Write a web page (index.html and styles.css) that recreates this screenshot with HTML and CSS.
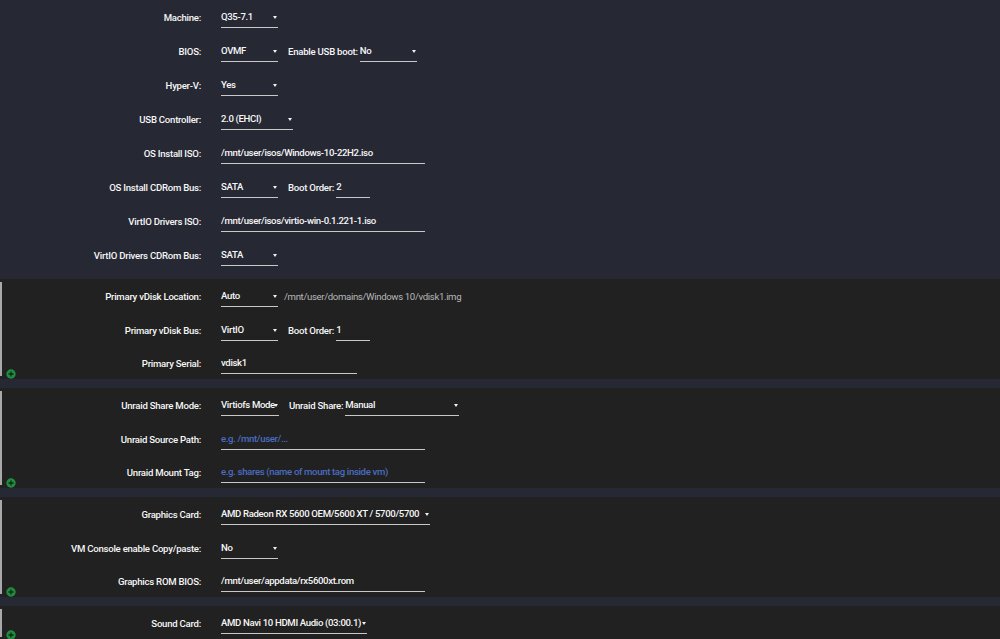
FILE: index.html
```html
<!DOCTYPE html>
<html lang="en">
<head>
    <meta charset="UTF-8">
    <meta name="viewport" content="width=device-width, initial-scale=1.0">
    <title>VM Settings</title>
    <link rel="stylesheet" href="styles.css">
</head>
<body>
    <div class="page">
        <!-- General settings -->
        <div class="block">
            <div class="row">
                <div class="label">Machine:</div>
                <div class="value"><div class="select w57">Q35-7.1</div></div>
            </div>
            <div class="row">
                <div class="label">BIOS:</div>
                <div class="value">
                    <div class="select w57">OVMF</div>
                    <span class="inline-label gap">Enable USB boot:</span>
                    <div class="select w57">No</div>
                </div>
            </div>
            <div class="row">
                <div class="label">Hyper-V:</div>
                <div class="value"><div class="select w57">Yes</div></div>
            </div>
            <div class="row">
                <div class="label">USB Controller:</div>
                <div class="value"><div class="select w72">2.0 (EHCI)</div></div>
            </div>
            <div class="row">
                <div class="label">OS Install ISO:</div>
                <div class="value"><input class="text w204" type="text" value="/mnt/user/isos/Windows-10-22H2.iso"></div>
            </div>
            <div class="row">
                <div class="label">OS Install CDRom Bus:</div>
                <div class="value">
                    <div class="select w57">SATA</div>
                    <span class="inline-label gap">Boot Order:</span>
                    <input class="text w34" type="text" value="2">
                </div>
            </div>
            <div class="row">
                <div class="label">VirtIO Drivers ISO:</div>
                <div class="value"><input class="text w204" type="text" value="/mnt/user/isos/virtio-win-0.1.221-1.iso"></div>
            </div>
            <div class="row">
                <div class="label">VirtIO Drivers CDRom Bus:</div>
                <div class="value"><div class="select w57">SATA</div></div>
            </div>
        </div>

        <!-- Disk -->
        <div class="section">
            <div class="row">
                <div class="label">Primary vDisk Location:</div>
                <div class="value">
                    <div class="select w57">Auto</div>
                    <span class="path">/mnt/user/domains/Windows 10/vdisk1.img</span>
                </div>
            </div>
            <div class="row">
                <div class="label">Primary vDisk Bus:</div>
                <div class="value">
                    <div class="select w57">VirtIO</div>
                    <span class="inline-label gap">Boot Order:</span>
                    <input class="text w34" type="text" value="1">
                </div>
            </div>
            <div class="row">
                <div class="label">Primary Serial:</div>
                <div class="value"><input class="text w136" type="text" value="vdisk1"></div>
            </div>
            <span class="add-btn"><svg width="10" height="10" viewBox="0 0 10 10"><circle cx="5" cy="5" r="4.7" fill="#1f8c3f"/><path d="M5 2.5v5M2.5 5h5" stroke="#0e2a16" stroke-width="1.3"/></svg></span>
        </div>

        <!-- Shares -->
        <div class="section">
            <div class="row">
                <div class="label">Unraid Share Mode:</div>
                <div class="value">
                    <div class="select w58">Virtiofs Mode</div>
                    <span class="inline-label gap">Unraid Share:</span>
                    <div class="select w114">Manual</div>
                </div>
            </div>
            <div class="row">
                <div class="label">Unraid Source Path:</div>
                <div class="value"><input class="text w204" type="text" placeholder="e.g. /mnt/user/..."></div>
            </div>
            <div class="row">
                <div class="label">Unraid Mount Tag:</div>
                <div class="value"><input class="text w204" type="text" placeholder="e.g. shares (name of mount tag inside vm)"></div>
            </div>
            <span class="add-btn"><svg width="10" height="10" viewBox="0 0 10 10"><circle cx="5" cy="5" r="4.7" fill="#1f8c3f"/><path d="M5 2.5v5M2.5 5h5" stroke="#0e2a16" stroke-width="1.3"/></svg></span>
        </div>

        <!-- Graphics -->
        <div class="section">
            <div class="row">
                <div class="label">Graphics Card:</div>
                <div class="value"><div class="select w209">AMD Radeon RX 5600 OEM/5600 XT / 5700/5700</div></div>
            </div>
            <div class="row">
                <div class="label">VM Console enable Copy/paste:</div>
                <div class="value"><div class="select w57">No</div></div>
            </div>
            <div class="row">
                <div class="label">Graphics ROM BIOS:</div>
                <div class="value"><input class="text w204" type="text" value="/mnt/user/appdata/rx5600xt.rom"></div>
            </div>
            <span class="add-btn"><svg width="10" height="10" viewBox="0 0 10 10"><circle cx="5" cy="5" r="4.7" fill="#1f8c3f"/><path d="M5 2.5v5M2.5 5h5" stroke="#0e2a16" stroke-width="1.3"/></svg></span>
        </div>

        <!-- Sound -->
        <div class="section">
            <div class="row">
                <div class="label">Sound Card:</div>
                <div class="value"><div class="select w146">AMD Navi 10 HDMI Audio (03:00.1)</div></div>
            </div>
            <span class="add-btn"><svg width="10" height="10" viewBox="0 0 10 10"><circle cx="5" cy="5" r="4.7" fill="#1f8c3f"/><path d="M5 2.5v5M2.5 5h5" stroke="#0e2a16" stroke-width="1.3"/></svg></span>
        </div>
    </div>
</body>
</html>
```

FILE: styles.css
```css
* {
    box-sizing: border-box;
}
html, body {
    margin: 0;
    height: 100%;
    overflow: hidden;
}
body {
    background: #262834;
    color: #f6f6f6;
    font-family: Roboto, "Liberation Sans", sans-serif;
    font-size: 9.6px;
    font-weight: 500;
    letter-spacing: -0.35px;
}
.block {
    padding-bottom: 7px;
}
.section {
    position: relative;
    background: #212121;
    margin-bottom: 9px;
}
/* left rule, inset a little from the section edges */
.section::before {
    content: "";
    position: absolute;
    left: 0;
    top: 3px;
    bottom: 3px;
    width: 2px;
    background: #a9a9a9;
}
.row {
    display: flex;
    align-items: center;
    height: 34px;
}
.section .row:nth-child(3) {
    height: 32px;
}
.label {
    width: 201px;
    text-align: right;
    letter-spacing: -0.25px;
    white-space: nowrap;
}
.value {
    display: flex;
    align-items: center;
    margin-left: 20px;
}
.select {
    position: relative;
    height: 21px;
    line-height: 20px;
    border-bottom: 1px solid #c8c8c8;
    padding-right: 6px;
    white-space: nowrap;
}
.select::after {
    content: "";
    position: absolute;
    right: 1px;
    top: 9px;
    border-left: 2px solid transparent;
    border-right: 2px solid transparent;
    border-top: 3px solid #f2f2f2;
}
.text {
    height: 21px;
    padding: 0;
    background: transparent;
    border: none;
    border-bottom: 1px solid #c8c8c8;
    color: #f6f6f6;
    font-family: inherit;
    font-size: inherit;
    font-weight: inherit;
    letter-spacing: inherit;
    outline: none;
}
.text::placeholder {
    color: #4b6cc2;
}
.inline-label {
    margin-right: 2px;
    letter-spacing: -0.25px;
    white-space: nowrap;
}
.gap {
    margin-left: 10px;
}
.path {
    margin-left: 6px;
    color: #b8b8b8;
    font-weight: 400;
}
.add-btn {
    position: absolute;
    left: 6px;
    bottom: 0;
    display: block;
    width: 10px;
    height: 10px;
}
.add-btn svg {
    display: block;
}
.w34 { width: 34px; }
.w57 { width: 57px; }
.w58 { width: 58px; }
.w72 { width: 72px; }
.w114 { width: 114px; }
.w136 { width: 136px; }
.w146 { width: 146px; }
.w204 { width: 204px; }
.w209 { width: 209px; }
```
